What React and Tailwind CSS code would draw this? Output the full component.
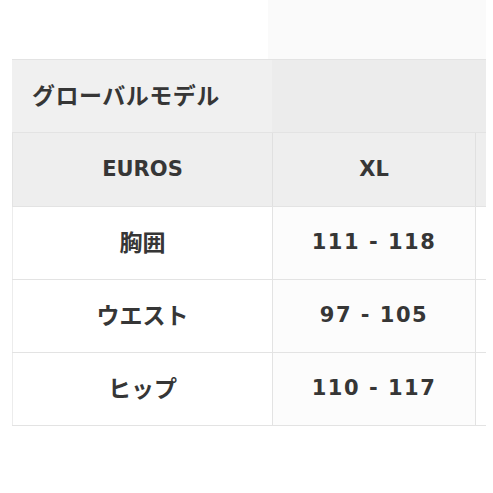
import React from 'react';

const rows = [
  { label: '胸囲', value: '111 - 118' },
  { label: 'ウエスト', value: '97 - 105' },
  { label: 'ヒップ', value: '110 - 117' },
];

export default function App() {
  return (
    <div
      className="w-[493px] h-[493px] bg-white text-[#363636] overflow-hidden"
      style={{ fontFamily: '"DejaVu Sans", "Noto Sans CJK JP", sans-serif' }}
    >
      {/* top strip */}
      <div className="flex h-[59px]">
        <div className="w-[268px]" />
        <div className="w-[218px] bg-[#fafafa]" />
      </div>

      <div className="ml-[12px] w-[474px]">
        {/* model heading */}
        <div className="flex h-[74px] border-y border-[#e3e3e3] bg-[#f0f0f0]">
          <div className="w-[260px] flex items-center pl-[20px] text-[23px] font-semibold tracking-[0.5px]">
            グローバルモデル
          </div>
          <div className="flex-1 bg-[#ececec]" />
        </div>

        {/* size header */}
        <div className="flex h-[74px] bg-[#eeeeee] border-b border-[#e3e3e3] text-[21px] font-bold">
          <div className="w-[260px] flex items-center justify-center border-l border-[#e3e3e3]">EUROS</div>
          <div className="w-[203px] flex items-center justify-center border-l border-[#e0e0e0]">XL</div>
          <div className="flex-1 border-l border-[#e0e0e0]" />
        </div>

        {rows.map((r) => (
          <div key={r.label} className="flex h-[73px] border-b border-[#e3e3e3] text-[21px] font-bold">
            <div className="w-[260px] flex items-center justify-center border-l border-[#ececec] text-[23px] font-semibold">
              {r.label}
            </div>
            <div className="w-[203px] flex items-center justify-center border-l border-[#e3e3e3] bg-[#fcfcfc] tracking-[1.5px]">
              {r.value}
            </div>
            <div className="flex-1 border-l border-[#e3e3e3]" />
          </div>
        ))}
      </div>
    </div>
  );
}
